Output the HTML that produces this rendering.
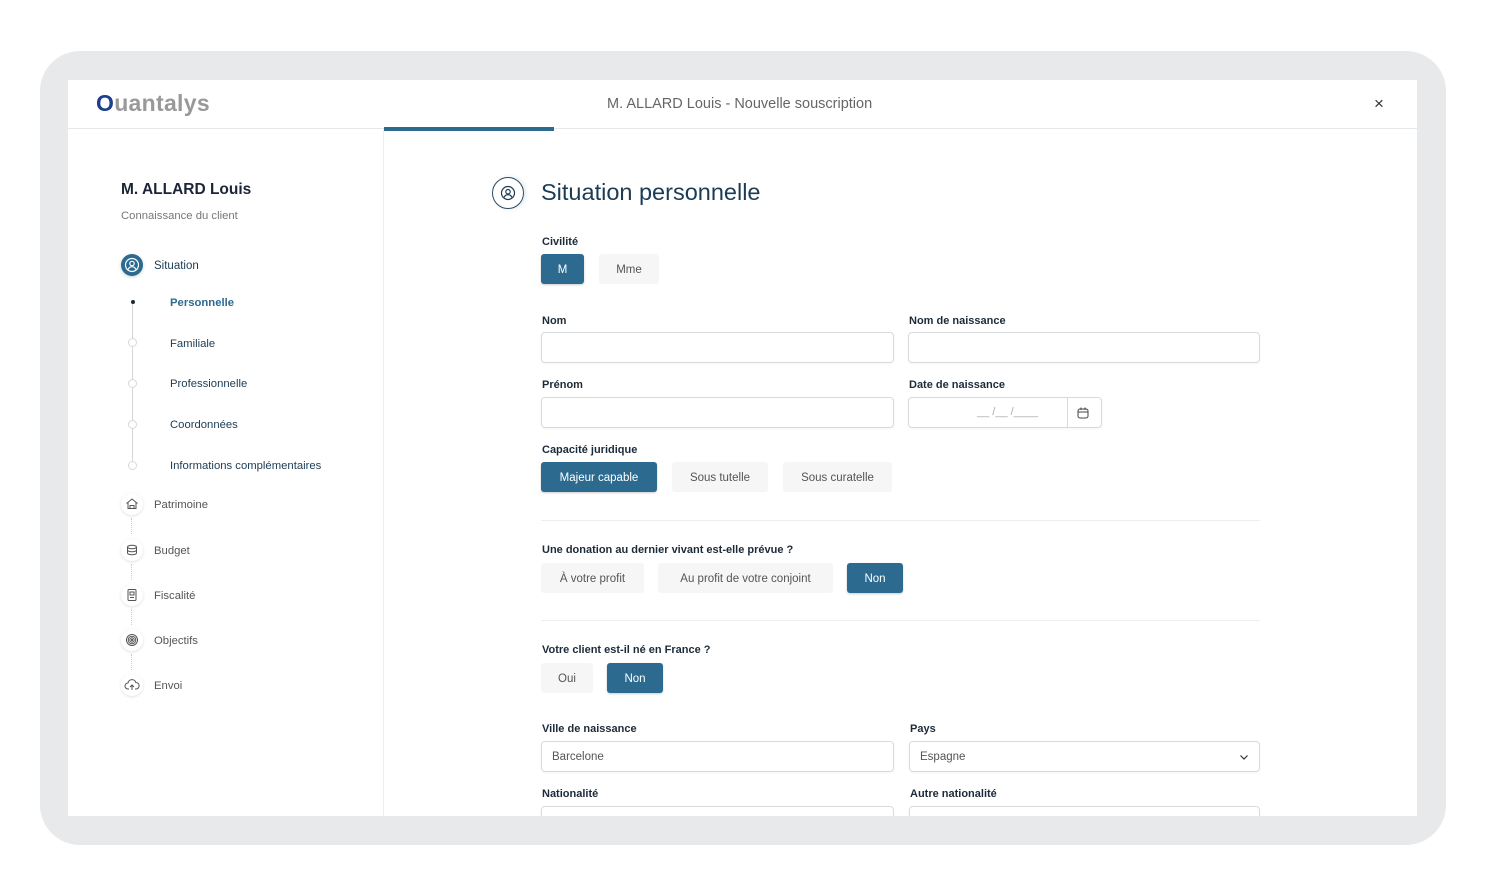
<!DOCTYPE html>
<html><head><meta charset="utf-8"><style>
*{box-sizing:border-box;margin:0;padding:0}
body{width:1486px;height:896px;background:#fff;font-family:"Liberation Sans",sans-serif;position:relative;overflow:hidden;color:#1c2b3a}
.frame{position:absolute;left:40px;top:51px;width:1406px;height:794px;background:#e8e9eb;border-radius:40px}
.win{position:absolute;left:68px;top:80px;width:1349px;height:736px;background:#fff;overflow:hidden}
.hdr{position:absolute;left:0;top:0;width:100%;height:49px;border-bottom:1px solid #e6e8ea}
.abs{position:absolute}
.side{position:absolute;left:0;top:49px;width:316px;height:700px;border-right:1px solid #eceef0}
.lbl{position:absolute;font-size:11px;font-weight:bold;color:#1c2b3a;margin-top:1px}
.inp{position:absolute;height:31px;border:1px solid #d8dbde;border-radius:4px;background:#fff;box-shadow:0 1px 2px rgba(0,0,0,.04)}
.btn{position:absolute;height:30px;border-radius:3px;font-size:11.5px;display:flex;align-items:center;justify-content:center;background:#f6f6f7;color:#555;padding-top:2px}
.on{background:#2c6b8f;color:#fff;box-shadow:0 1px 2px rgba(0,0,0,.2)}
.sub{position:absolute;left:102px;font-size:11.3px;color:#1c3c55;margin-top:1px}
.dot{position:absolute;left:60px;width:9px;height:9px;border:1px solid #d5d8db;border-radius:50%;background:#fff}
.nav{position:absolute;left:86px;font-size:11.3px;color:#555;margin-top:1px}
.ic{position:absolute;left:53px;width:22px;height:22px;border-radius:50%;background:#fff;box-shadow:0 1px 3px rgba(0,0,0,.12)}
.vd{position:absolute;left:63px;width:0;height:16px;border-left:1px dotted #ccc}
.sep{position:absolute;left:473px;width:719px;height:1px;background:#eceef0}
</style></head><body>
<div class="frame"></div>
<div class="win">
 <div class="hdr">
  <div class="abs" style="left:28px;top:10px;font-size:23px;font-weight:bold;color:#999;letter-spacing:0.3px"><span style="color:#1d3f8e">O</span>uantalys</div>
  <div class="abs" style="left:539px;top:16px;font-size:14.5px;color:#666">M. ALLARD Louis - Nouvelle souscription</div>
  <div class="abs" style="left:1306px;top:14px;font-size:17px;color:#333">×</div>
 </div>
 <div class="abs" style="left:316px;top:47px;width:170px;height:4px;background:#2c6b8f"></div>
 <div class="side">
  <div class="abs" style="left:53px;top:52px;font-size:15.5px;font-weight:bold;color:#1c2438">M. ALLARD Louis</div>
  <div class="abs" style="left:53px;top:81px;font-size:11.3px;color:#777">Connaissance du client</div>
  <div class="abs" style="left:53px;top:125px;width:22px;height:22px;border-radius:50%;background:#2c6b8f;box-shadow:0 1px 3px rgba(0,0,0,.2)"><svg width="22" height="22" viewBox="0 0 22 22" fill="none" stroke="#fff" stroke-width="1.2"><circle cx="11" cy="11" r="6.5"/><circle cx="11" cy="9.5" r="2.2"/><path d="M7 15.5c1-2 2.5-2.8 4-2.8s3 .8 4 2.8"/></svg></div>
  <div class="abs" style="left:86px;top:131px;font-size:11.5px;color:#1c3c55">Situation</div>
  <div class="abs" style="left:64px;top:173px;width:1px;height:165px;background:#d5d8db"></div>
  <div class="dot" style="top:168px;border:none;background:transparent"><div style="position:absolute;left:2.5px;top:2.5px;width:4px;height:4px;border-radius:50%;background:#1c2b3a"></div></div>
  <div class="sub" style="top:167px;font-weight:bold;color:#2c6b8f">Personnelle</div>
  <div class="dot" style="top:209px"></div><div class="sub" style="top:208px">Familiale</div>
  <div class="dot" style="top:250px"></div><div class="sub" style="top:248px">Professionnelle</div>
  <div class="dot" style="top:291px"></div><div class="sub" style="top:289px">Coordonnées</div>
  <div class="dot" style="top:332px"></div><div class="sub" style="top:330px">Informations complémentaires</div>
  <div class="ic" style="top:364px"><svg width="22" height="22" viewBox="0 0 22 22" fill="none" stroke="#555" stroke-width="1"><path d="M5.5 10.5L11 6l5.5 4.5M7 9.5v6h8v-6M9 15.5v-3h4v3"/></svg></div><div class="nav" style="top:369px">Patrimoine</div>
  <div class="vd" style="top:389px"></div>
  <div class="ic" style="top:410px"><svg width="22" height="22" viewBox="0 0 22 22" fill="none" stroke="#555" stroke-width="1"><ellipse cx="11" cy="8" rx="4.5" ry="1.8"/><path d="M6.5 8v6c0 1 2 1.8 4.5 1.8s4.5-.8 4.5-1.8V8M6.5 11c0 1 2 1.8 4.5 1.8s4.5-.8 4.5-1.8"/></svg></div><div class="nav" style="top:415px">Budget</div>
  <div class="vd" style="top:435px"></div>
  <div class="ic" style="top:455px"><svg width="22" height="22" viewBox="0 0 22 22" fill="none" stroke="#555" stroke-width="1"><rect x="7" y="5.5" width="8" height="11" rx="1"/><rect x="9" y="8" width="4" height="3"/><path d="M9 13.5h4"/></svg></div><div class="nav" style="top:460px">Fiscalité</div>
  <div class="vd" style="top:480px"></div>
  <div class="ic" style="top:500px"><svg width="22" height="22" viewBox="0 0 22 22" fill="none" stroke="#555" stroke-width="1"><circle cx="11" cy="11" r="5.5"/><circle cx="11" cy="11" r="3.8"/><circle cx="11" cy="11" r="2.2"/><circle cx="11" cy="11" r=".7"/></svg></div><div class="nav" style="top:505px">Objectifs</div>
  <div class="vd" style="top:525px"></div>
  <div class="ic" style="top:545px"><svg width="22" height="22" viewBox="0 0 22 22" fill="none" stroke="#555" stroke-width="1"><path d="M8 15H7a3 3 0 010-6 4 4 0 017.8-.5A3 3 0 1115 15h-1M11 16v-5M9 13l2-2 2 2"/></svg></div><div class="nav" style="top:550px">Envoi</div>
 </div>
 <!-- main -->
 <div class="abs" style="left:424px;top:97px;width:32px;height:32px;border-radius:50%;border:1.3px solid #2a4a5e;box-shadow:2px 0 4px rgba(44,107,143,.15)"><svg width="30" height="30" viewBox="0 0 30 30" fill="none" stroke="#1c3c55" stroke-width="1.2"><circle cx="15" cy="15" r="6.5"/><circle cx="15" cy="13.7" r="2.2"/><path d="M11 19.3c1-2 2.5-2.7 4-2.7s3 .7 4 2.7"/></svg></div>
 <div class="abs" style="left:473px;top:99px;font-size:23.5px;color:#1c3c55">Situation personnelle</div>
 <div class="lbl" style="left:474px;top:155px">Civilité</div>
 <div class="btn on" style="left:473px;top:174px;width:43px">M</div>
 <div class="btn" style="left:531px;top:174px;width:60px">Mme</div>
 <div class="lbl" style="left:474px;top:234px">Nom</div>
 <div class="lbl" style="left:841px;top:234px">Nom de naissance</div>
 <div class="inp" style="left:473px;top:252px;width:353px"></div>
 <div class="inp" style="left:840px;top:252px;width:352px"></div>
 <div class="lbl" style="left:474px;top:298px">Prénom</div>
 <div class="lbl" style="left:841px;top:298px">Date de naissance</div>
 <div class="inp" style="left:473px;top:317px;width:353px"></div>
 <div class="inp" style="left:840px;top:317px;width:194px">
  <div class="abs" style="left:68px;top:8px;font-size:11px;color:#aaa">__ /__ /____</div>
  <div class="abs" style="left:158px;top:0;width:1px;height:29px;background:#d8dbde"></div>
  <svg class="abs" style="left:167px;top:8px" width="14" height="14" viewBox="0 0 14 14" fill="none" stroke="#444" stroke-width="1"><rect x="2" y="3" width="10" height="9" rx="2"/><path d="M2 6h10M5 1.5v2.5M9 1.5v2.5"/></svg>
 </div>
 <div class="lbl" style="left:474px;top:363px">Capacité juridique</div>
 <div class="btn on" style="left:473px;top:382px;width:116px">Majeur capable</div>
 <div class="btn" style="left:604px;top:382px;width:96px">Sous tutelle</div>
 <div class="btn" style="left:715px;top:382px;width:109px">Sous curatelle</div>
 <div class="sep" style="top:440px"></div>
 <div class="lbl" style="left:474px;top:463px">Une donation au dernier vivant est-elle prévue ?</div>
 <div class="btn" style="left:473px;top:483px;width:103px">À votre profit</div>
 <div class="btn" style="left:590px;top:483px;width:175px">Au profit de votre conjoint</div>
 <div class="btn on" style="left:779px;top:483px;width:56px">Non</div>
 <div class="sep" style="top:540px"></div>
 <div class="lbl" style="left:474px;top:563px">Votre client est-il né en France ?</div>
 <div class="btn" style="left:473px;top:583px;width:52px">Oui</div>
 <div class="btn on" style="left:539px;top:583px;width:56px">Non</div>
 <div class="lbl" style="left:474px;top:642px">Ville de naissance</div>
 <div class="lbl" style="left:842px;top:642px">Pays</div>
 <div class="inp" style="left:473px;top:661px;width:353px"><div class="abs" style="left:10px;top:9px;font-size:11.5px;color:#555">Barcelone</div></div>
 <div class="inp" style="left:841px;top:661px;width:351px"><div class="abs" style="left:10px;top:9px;font-size:11.5px;color:#555">Espagne</div>
  <svg class="abs" style="left:329px;top:11px" width="10" height="8" viewBox="0 0 10 8" fill="none" stroke="#333" stroke-width="1.2"><path d="M1.5 2.5L5 6l3.5-3.5"/></svg></div>
 <div class="lbl" style="left:474px;top:707px">Nationalité</div>
 <div class="lbl" style="left:842px;top:707px">Autre nationalité</div>
 <div class="inp" style="left:473px;top:726px;width:353px"></div>
 <div class="inp" style="left:841px;top:726px;width:351px"></div>
</div>
</body></html>
